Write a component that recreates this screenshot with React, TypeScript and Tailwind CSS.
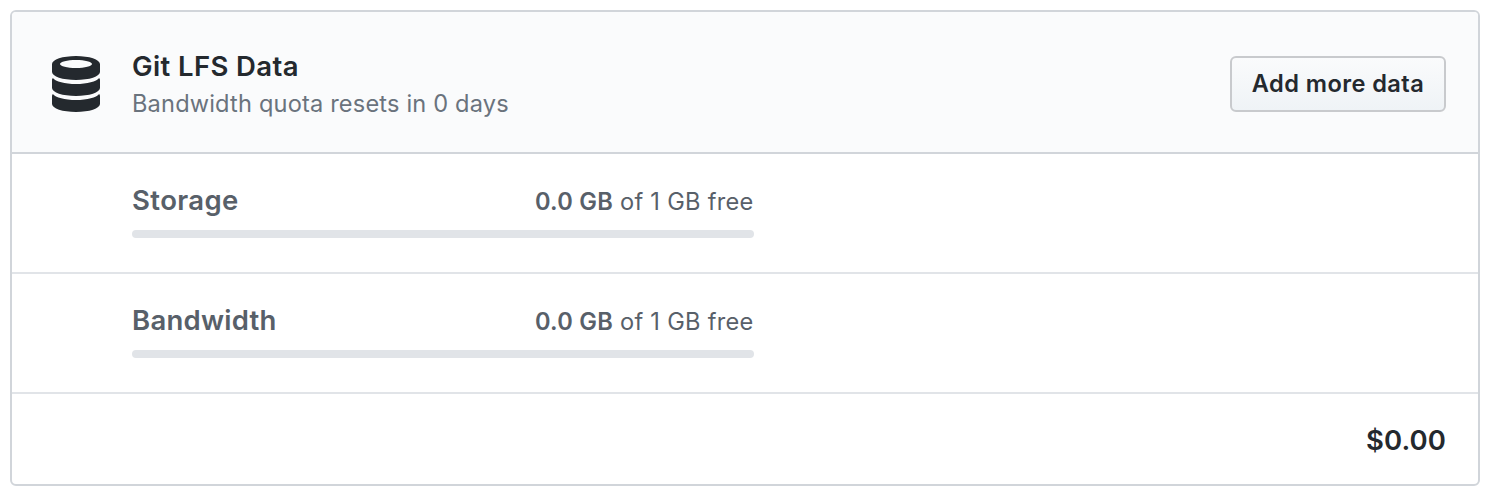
function DatabaseIcon() {
  return (
    <svg viewBox="0 0 12 16" className="h-16 w-12 shrink-0" fill="currentColor" aria-hidden="true">
      <path
        fillRule="evenodd"
        d="M6 15c-3.31 0-6-.9-6-2v-2c0-.17.09-.34.21-.5.67.86 3 1.5 5.79 1.5s5.12-.64 5.79-1.5c.13.16.21.33.21.5v2c0 1.1-2.69 2-6 2zm0-4c-3.31 0-6-.9-6-2V7c0-.11.04-.21.09-.31.03-.06.07-.13.12-.19C.88 7.36 3.21 8 6 8s5.12-.64 5.79-1.5c.05.06.09.13.12.19.05.1.09.21.09.31v2c0 1.1-2.69 2-6 2zm0-4c-3.31 0-6-.9-6-2V3c0-1.1 2.69-2 6-2s6 .9 6 2v2c0 1.1-2.69 2-6 2zm0-5c-2.21 0-4 .45-4 1s1.79 1 4 1 4-.45 4-1-1.79-1-4-1z"
      />
    </svg>
  );
}

function UsageRow({ label, labelClass }: { label: string; labelClass: string }) {
  return (
    <div className="h-[120px] border-b-2 border-[#e1e4e8] pt-[25px] pl-[120px] text-[#586069]">
      <div className="w-[622px]">
        <div className="flex h-[42px] items-baseline justify-between whitespace-nowrap leading-[42px]">
          <h3 className={`text-[27.5px] font-semibold ${labelClass}`}>{label}</h3>
          <span className="pr-[0.5px] text-[23.6px] tracking-[0.28px]">
            <strong className="font-semibold">0.0 GB</strong> of 1 GB free
          </span>
        </div>
        <div className="mt-[9px] h-2 rounded-full bg-[#e1e4e8]" />
      </div>
    </div>
  );
}

export default function App() {
  return (
    <div className="h-[494px] bg-white p-[10px] pb-2 font-['Inter',sans-serif] text-[#24292e]">
      <section className="flex h-[476px] flex-col overflow-hidden rounded-md border-2 border-[#d1d5da]">
        <header className="flex h-[142px] shrink-0 items-center border-b-2 border-[#d1d5da] bg-[#fafbfc] pt-1 pr-8 pl-10">
          <DatabaseIcon />
          <div className="ml-8 flex-1 whitespace-nowrap">
            <h2 className="text-[27.5px] leading-10 font-semibold tracking-[0.38px]">Git LFS Data</h2>
            <p className="pb-px text-[23.6px] leading-[35px] tracking-[0.17px] text-[#6a737d]">
              Bandwidth quota resets in 0 days
            </p>
          </div>
          <button className="h-14 w-[216px] rounded-md border-2 border-[#c8cacd] bg-linear-to-b from-[#fafbfc] to-[#eff3f6] text-[23.6px] leading-[52px] font-semibold tracking-[0.42px] whitespace-nowrap">
            Add more data
          </button>
        </header>
        <UsageRow label="Storage" labelClass="tracking-[0.4px]" />
        <UsageRow label="Bandwidth" labelClass="tracking-[0.25px]" />
        <footer className="flex h-[90px] items-center justify-end pt-0.5 pr-8">
          <span className="text-[27.5px] leading-[42px] font-semibold tracking-[0.1px]">$0.00</span>
        </footer>
      </section>
    </div>
  );
}
